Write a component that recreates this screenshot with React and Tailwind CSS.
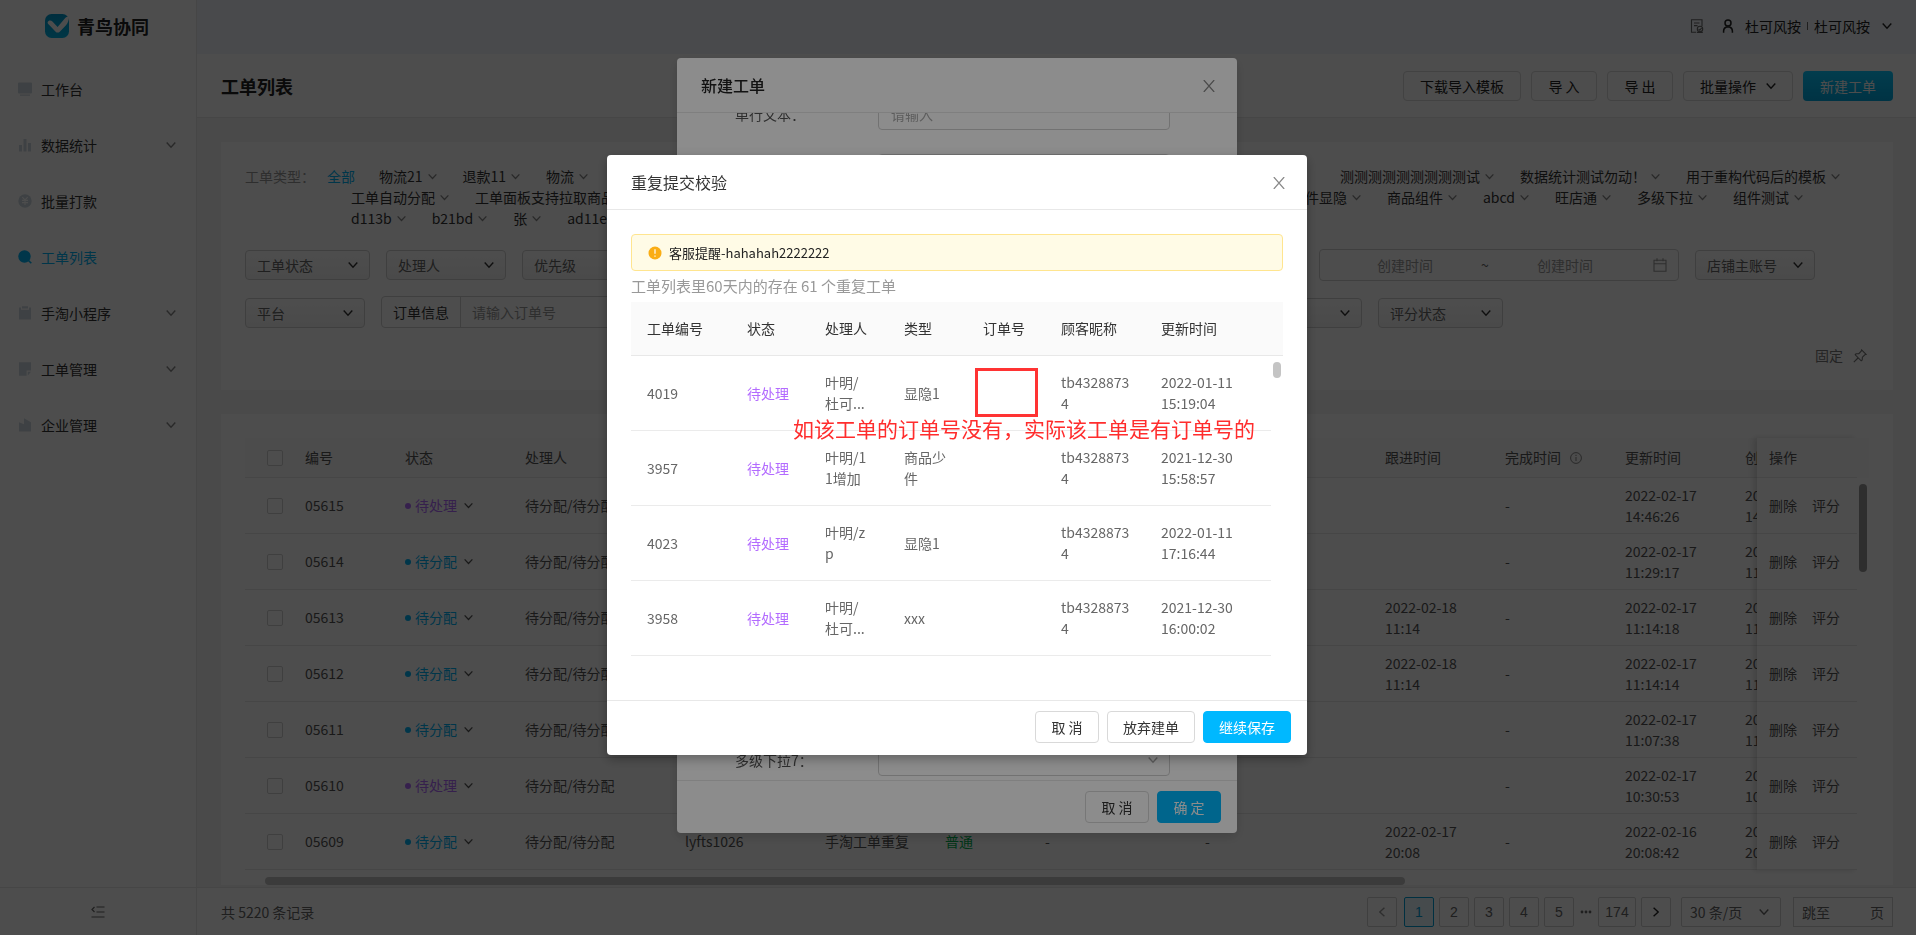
import React, { useState } from "react";
import clsx from "clsx";

const menu = [
  { name: "工作台", icon: "desk" },
  { name: "数据统计", icon: "chart", sub: true },
  { name: "批量打款", icon: "pay" },
  { name: "工单列表", icon: "list" },
  { name: "手淘小程序", icon: "clip", sub: true },
  { name: "工单管理", icon: "note", sub: true },
  { name: "企业管理", icon: "corp", sub: true },
];

const typeRows = [
  {
    left: ["物流21", "退款11", "物流"],
    right: ["测测测测测测测测测试", "数据统计测试勿动！", "用于重构代码后的模板"],
  },
  {
    left: ["工单自动分配", "工单面板支持拉取商品"],
    right: ["组件显隐", "商品组件", "abcd", "旺店通", "多级下拉", "组件测试"],
  },
  { left: ["d113b", "b21bd", "张", "ad11e"], right: [] },
];

const orders = [
  { id: "05615", status: "待处理", follow: "", updated: "2022-02-17\n14:46:26" },
  { id: "05614", status: "待分配", follow: "", updated: "2022-02-17\n11:29:17" },
  { id: "05613", status: "待分配", follow: "2022-02-18\n11:14", updated: "2022-02-17\n11:14:18" },
  { id: "05612", status: "待分配", follow: "2022-02-18\n11:14", updated: "2022-02-17\n11:14:14" },
  { id: "05611", status: "待分配", follow: "", updated: "2022-02-17\n11:07:38" },
  { id: "05610", status: "待处理", follow: "", updated: "2022-02-17\n10:30:53" },
  { id: "05609", status: "待分配", follow: "2022-02-17\n20:08", updated: "2022-02-16\n20:08:42" },
];

const repeats = [
  { id: "4019", owner: "叶明/\n杜可...", type: "显隐1", time: "2022-01-11\n15:19:04" },
  { id: "3957", owner: "叶明/1\n1增加", type: "商品少\n件", time: "2021-12-30\n15:58:57" },
  { id: "4023", owner: "叶明/z\np", type: "显隐1", time: "2022-01-11\n17:16:44" },
  { id: "3958", owner: "叶明/\n杜可...", type: "xxx", time: "2021-12-30\n16:00:02" },
];

function Chevron({ className }) {
  return (
    <svg viewBox="0 0 10 10" className={clsx("shrink-0", className)} fill="none" stroke="currentColor" strokeWidth="1.4">
      <path d="M0.7 2.6 L5 7.2 L9.3 2.6" />
    </svg>
  );
}

function CloseIcon() {
  return (
    <svg viewBox="0 0 12 12" className="h-3 w-3" fill="none" stroke="currentColor" strokeWidth="1.2">
      <path d="M0.8 0 L11.2 12 M11.2 0 L0.8 12" />
    </svg>
  );
}

function MenuIcon({ name }) {
  return (
    <svg viewBox="0 0 14 14" className="h-3.5 w-3.5 shrink-0" fill="currentColor">
      {name === "desk" && <path d="M1 0.5h12a1 1 0 0 1 1 1v9a1 1 0 0 1-1 1H1a1 1 0 0 1-1-1v-9a1 1 0 0 1 1-1zM2 12.5h10v1.2H2z" />}
      {name === "chart" && <path d="M1 7h3v6.5H1zM5.5 1h3v12.5h-3zM10 5h3v8.5h-3z" />}
      {name === "pay" && (
        <>
          <circle cx="7" cy="7" r="6.7" />
          <path d="M4.3 3.2 L7 6 L9.7 3.2 M4 6.4h6 M4 8.6h6 M7 6v5" fill="none" stroke="#fff" strokeWidth="1.1" />
        </>
      )}
      {name === "list" && (
        <>
          <circle cx="6.5" cy="6.5" r="6.2" />
          <path d="M10 10 L13.3 13.3" stroke="currentColor" strokeWidth="1.6" />
        </>
      )}
      {name === "clip" && <path d="M1 1.5h2v2.3h8V1.5h2v12H1zM4 0.2h6v2.4H4z" />}
      {name === "note" && <path d="M1 0.3h12v8.2H8.6v5.2H1zM9.8 9.8H13L9.8 13.4z" />}
      {name === "corp" && <path d="M1 4.2 L6 6.2 V0.3 L13 4.2 V13.5 H1z" />}
    </svg>
  );
}

function Sidebar() {
  return (
    <aside className="flex w-[197px] shrink-0 flex-col border-r border-[#e8e8e8] bg-white">
      <div className="flex h-[52px] items-center gap-2 pl-[45px]">
        <svg viewBox="0 0 24 24" className="h-6 w-6">
          <defs>
            <linearGradient id="logo" x1="0" y1="0" x2="0" y2="1">
              <stop offset="0" stopColor="#0098cc" />
              <stop offset="1" stopColor="#00b4e6" />
            </linearGradient>
          </defs>
          <rect width="24" height="24" rx="6.5" fill="url(#logo)" />
          <path d="M2.6 8.2 C3.5 6 6 6 7.4 7.6 L12.6 13 L20 4.2 C21 3.2 22.5 2.4 24 2.6 C23.8 6.5 23 9 21 11.2 L15 17.4 C13.5 19 11.8 19 10.4 17.4 L4 10.8 C3.2 10 2.6 9.2 2.6 8.2z" fill="#fff" />
        </svg>
        <span className="text-lg font-bold text-[#222]">青鸟协同</span>
      </div>
      <nav className="flex flex-1 flex-col pt-[9px]">
        {menu.map((item) => (
          <a
            key={item.name}
            href="#"
            className={clsx("flex h-14 items-center pl-[18px] pr-5 text-sm", item.icon === "list" ? "text-[#00b3f5]" : "text-[#333]")}
          >
            <span className={item.icon === "list" ? "text-[#00b3f5]" : "text-[#cdd8e0]"}>
              <MenuIcon name={item.icon} />
            </span>
            <span className="ml-[9px] flex-1">{item.name}</span>
            {item.sub && <Chevron className="h-2.5 w-2.5 text-[#888]" />}
          </a>
        ))}
      </nav>
      <button aria-label="收起菜单" className="flex h-12 items-center justify-center border-t border-[#e8e8e8] text-[#666]">
        <svg viewBox="0 0 14 12" className="h-3 w-3.5" fill="none" stroke="currentColor" strokeWidth="1.2">
          <path d="M5.5 1h8 M5.5 6h8 M0.5 11h13 M3.5 1 L1 3.5 L3.5 6" />
        </svg>
      </button>
    </aside>
  );
}

function TopBar() {
  return (
    <header className="flex h-[54px] shrink-0 items-center justify-end bg-[#f0f5fa] pb-0.5 pr-6 text-sm text-[#222]">
      <svg viewBox="0 0 14 14" className="mr-[17px] h-3.5 w-3.5 text-[#666]" fill="none" stroke="currentColor" strokeWidth="1.1">
        <path d="M12 7V0.7H1.5v12.6H6 M4 4h5.5 M4 6.6h3.5 M6.8 13.4h6" />
        <circle cx="10" cy="10" r="2.7" />
        <path d="M8.6 10.2 L9.8 11.2 L11.6 9" />
      </svg>
      <svg viewBox="0 0 14 14" className="mr-2.5 h-3.5 w-3.5" fill="none" stroke="currentColor" strokeWidth="1.5">
        <circle cx="7" cy="4" r="3" />
        <path d="M2.6 13.8 V12 C2.6 9.5 4 8.6 5.4 8 H8.6 C10 8.6 11.4 9.5 11.4 12 V13.8" />
      </svg>
      <span>杜可风按</span>
      <span className="mx-1.5 h-2 w-px bg-[#666]" />
      <span>杜可风按</span>
      <Chevron className="ml-3 h-2.5 w-2.5" />
    </header>
  );
}

function TitleButton({ children }) {
  return (
    <button className="flex h-[30px] min-w-[66px] items-center justify-center rounded border border-[#d9d9d9] bg-white px-4 text-sm text-[#222]">
      {children}
    </button>
  );
}

function TitleBar() {
  return (
    <div className="flex h-16 shrink-0 items-center border-b border-[#e8e8e8] bg-white pl-6 pr-[23px]">
      <h1 className="flex-1 text-lg font-bold text-[#222]">工单列表</h1>
      <div className="flex gap-2.5">
        <TitleButton>下载导入模板</TitleButton>
        <TitleButton>导 入</TitleButton>
        <TitleButton>导 出</TitleButton>
        <TitleButton>
          批量操作
          <Chevron className="ml-2.5 h-2.5 w-2.5" />
        </TitleButton>
        <button className="flex h-[30px] items-center rounded bg-linear-to-b from-[#0ac8ff] to-[#00a8e0] px-[17px] text-sm text-white">新建工单</button>
      </div>
    </div>
  );
}

function FilterSelect({ label, width }) {
  return (
    <div className={clsx("relative", width)}>
      <select
        aria-label={label}
        className="block h-[30px] w-full appearance-none rounded border border-[#d0d0d0] bg-linear-to-b from-white to-[#f5f5f5] pl-[11px] text-sm leading-7 text-[#666]"
      >
        <option>{label}</option>
      </select>
      <Chevron className="pointer-events-none absolute right-3 top-2.5 h-2.5 w-2.5 text-[#333]" />
    </div>
  );
}

function TypeItem({ name }) {
  return (
    <button className="mr-[26px] flex items-center gap-[5px] whitespace-nowrap">
      {name}
      <Chevron className="h-[9px] w-[9px] text-[#888]" />
    </button>
  );
}

function Filters() {
  return (
    <section className="bg-white px-6 pb-6 pt-6 text-sm">
      <div className="leading-[21px] text-[#333]">
        {typeRows.map((row, i) => (
          <div key={i} className="flex">
            {i === 0 ? (
              <div className="flex w-[134px] shrink-0">
                <span className="w-[82px] text-[#999]">工单类型：</span>
                <button className="text-[#00b3f5]">全部</button>
              </div>
            ) : (
              <div className="w-[106px] shrink-0" />
            )}
            {row.left.map((name) => (
              <TypeItem key={name} name={name} />
            ))}
            <div className={clsx("ml-auto flex", i === 0 ? "pr-[3px]" : "pr-10")}>
              {row.right.map((name) => (
                <TypeItem key={name} name={name} />
              ))}
            </div>
          </div>
        ))}
      </div>

      <div className="mt-5 flex items-center gap-4 pr-[54px]">
        <FilterSelect label="工单状态" width="w-[125px]" />
        <FilterSelect label="处理人" width="w-[120px]" />
        <FilterSelect label="优先级" width="w-[120px]" />
        <div className="flex-1" />
        <div className="flex h-8 w-[360px] items-center rounded border border-[#d0d0d0] px-[11px]">
          <input aria-label="创建时间起" placeholder="创建时间" className="w-[148px] text-center placeholder:text-[#999]" />
          <span className="w-3 text-center text-[#666]">~</span>
          <input aria-label="创建时间止" placeholder="创建时间" className="w-[148px] text-center placeholder:text-[#999]" />
          <svg viewBox="0 0 14 14" className="ml-auto h-3.5 w-3.5 text-[#999]" fill="none" stroke="currentColor" strokeWidth="1.1">
            <path d="M1 2.2h12v11H1z M1 5.8h12 M4 0.3v3 M10 0.3v3" />
          </svg>
        </div>
        <FilterSelect label="店铺主账号" width="w-[120px]" />
      </div>

      <div className="mt-[15px] flex items-end gap-4 pr-[366px]">
        <FilterSelect label="平台" width="w-[120px]" />
        <div className="flex h-8 flex-1 items-center rounded border border-[#d0d0d0]">
          <label htmlFor="orderInfo" className="flex h-full items-center border-r border-[#d0d0d0] px-[11px] text-[#333]">
            订单信息
          </label>
          <input id="orderInfo" placeholder="请输入订单号" className="flex-1 px-[11px] placeholder:text-[#999]" />
        </div>
        <FilterSelect label="来源" width="w-[120px]" />
        <FilterSelect label="评分状态" width="w-[125px]" />
      </div>

      <div className="mt-[17px] flex justify-end">
        <button className="flex items-center gap-2.5 leading-[21px] text-[#777]">
          固定
          <svg viewBox="0 0 14 14" className="mr-0.5 h-3.5 w-3.5" fill="none" stroke="currentColor" strokeWidth="1.1">
            <path d="M8.6 0.9 L13.1 5.4 L11.8 5.8 L9.4 8.2 L9.2 11 L8.2 11.8 L2.2 5.8 L3 4.8 L5.8 4.6 L8.2 2.2z M5 9 L0.8 13.2" />
          </svg>
        </button>
      </div>
    </section>
  );
}

function StatusTag({ status }) {
  return (
    <button className={clsx("flex items-center", status === "待处理" ? "text-[#b36bff]" : "text-[#00b3f5]")}>
      <i className="mr-1 h-1.5 w-1.5 rounded-full bg-current" />
      {status}
      <Chevron className="ml-[7px] h-[9px] w-[9px] text-[#555]" />
    </button>
  );
}

const th = "h-10 border-b border-[#e8e8e8] bg-[#fafafa] text-left font-normal whitespace-nowrap";
const td = "h-14 border-b border-[#e8e8e8] whitespace-pre p-0";

function OrderTable() {
  return (
    <section className="mt-6 bg-white px-6 pt-6 text-sm leading-[21px] text-[#555]">
      <div className="flex">
        <div className="min-w-0 flex-1 overflow-hidden">
          <table className="w-full table-fixed border-separate border-spacing-0">
            <colgroup>
              <col className="w-[60px]" />
              <col className="w-[100px]" />
              <col className="w-[120px]" />
              <col className="w-[160px]" />
              <col className="w-[140px]" />
              <col className="w-[120px]" />
              <col className="w-[100px]" />
              <col className="w-[160px]" />
              <col />
              <col className="w-[120px]" />
              <col className="w-[120px]" />
              <col className="w-[120px]" />
              <col className="w-[12px]" />
            </colgroup>
            <thead>
              <tr>
                <th className={clsx(th, "pl-[22px]")}>
                  <input type="checkbox" aria-label="全选" className="block h-4 w-4 appearance-none rounded-xs border border-[#d0d0d0] bg-white" />
                </th>
                <th className={th}>编号</th>
                <th className={th}>状态</th>
                <th className={th}>处理人</th>
                <th className={th}>创建人</th>
                <th className={th}>工单类型</th>
                <th className={th}>优先级</th>
                <th className={th}>订单号</th>
                <th className={th}>备注</th>
                <th className={th}>跟进时间</th>
                <th className={th}>
                  <span className="flex items-center gap-[9px]">
                    完成时间
                    <svg viewBox="0 0 12 12" className="h-3 w-3 text-[#888]" fill="none" stroke="currentColor">
                      <circle cx="6" cy="6" r="5.4" />
                      <path d="M6 5v4 M6 2.8v1.2" />
                    </svg>
                  </span>
                </th>
                <th className={th}>更新时间</th>
                <th className={clsx(th, "overflow-hidden")}>创建时间</th>
              </tr>
            </thead>
            <tbody>
              {orders.map((o) => (
                <tr key={o.id}>
                  <td className={clsx(td, "pl-[22px]")}>
                    <input type="checkbox" aria-label={o.id} className="block h-4 w-4 appearance-none rounded-xs border border-[#d0d0d0] bg-white" />
                  </td>
                  <td className={td}>{o.id}</td>
                  <td className={td}>
                    <StatusTag status={o.status} />
                  </td>
                  <td className={td}>待分配/待分配</td>
                  <td className={td}>lyfts1026</td>
                  <td className={td}>手淘工单重复</td>
                  <td className={clsx(td, "text-[#00b050]")}>普通</td>
                  <td className={td}>-</td>
                  <td className={td}>-</td>
                  <td className={td}>{o.follow}</td>
                  <td className={td}>-</td>
                  <td className={td}>{o.updated}</td>
                  <td className={clsx(td, "overflow-hidden")}>{o.updated}</td>
                </tr>
              ))}
            </tbody>
          </table>
        </div>

        <table className="relative w-[100px] shrink-0 border-separate border-spacing-0 bg-white shadow-[-3px_0_6px_rgba(0,0,0,0.15)]">
          <thead>
            <tr>
              <th className={clsx(th, "pl-3")}>操作</th>
            </tr>
          </thead>
          <tbody>
            {orders.map((o) => (
              <tr key={o.id}>
                <td className={td}>
                  <div className="flex gap-[15px] pl-3">
                    <button>删除</button>
                    <button>评分</button>
                  </div>
                </td>
              </tr>
            ))}
          </tbody>
        </table>

        <div className="relative w-3 bg-white">
          <div className="h-10 bg-[#fafafa]" />
          <div className="ml-0.5 mt-1.5 h-[88px] w-2 rounded-full bg-[#999]" />
        </div>
      </div>
      <div className="mx-5 mt-[7px] h-2">
        <div className="h-2 w-[72%] rounded-full bg-[#c4c4c4]" />
      </div>
    </section>
  );
}

function Pagination() {
  const [page, setPage] = useState(1);
  const box = "flex h-[30px] items-center justify-center rounded-xs border";

  return (
    <footer className="flex h-12 shrink-0 items-center border-t border-[#e8e8e8] bg-white pl-6 pr-[23px] text-sm text-[#666]">
      <span className="flex-1">共 5220 条记录</span>
      <div className="flex items-center gap-[5px] font-['Liberation_Sans','Noto_Sans_CJK_SC',sans-serif]">
        <button aria-label="上一页" className={clsx(box, "mr-0.5 w-[30px] border-[#d0d0d0] text-[#999]")}>
          <Chevron className="h-2.5 w-2.5 rotate-90" />
        </button>
        {[1, 2, 3, 4, 5].map((n) => (
          <button
            key={n}
            onClick={() => setPage(n)}
            className={clsx(box, "w-[30px]", n === page ? "border-[#00a0d8] bg-[#e6f7ff] text-[#00a0d8]" : "border-[#d0d0d0]")}
          >
            {n}
          </button>
        ))}
        <span className="w-[14px] text-center leading-none">
          <svg viewBox="0 0 12 4" className="mx-auto h-1 w-3" fill="currentColor">
            <circle cx="2" cy="2" r="1.4" />
            <circle cx="6" cy="2" r="1.4" />
            <circle cx="10" cy="2" r="1.4" />
          </svg>
        </span>
        <button className={clsx(box, "w-[38px] border-[#d0d0d0]")}>174</button>
        <button aria-label="下一页" className={clsx(box, "w-[30px] border-[#d0d0d0] text-[#222]")}>
          <Chevron className="h-2.5 w-2.5 -rotate-90" />
        </button>
      </div>
      <div className="relative ml-2.5 w-[100px]">
        <select aria-label="每页条数" className="block h-[30px] w-full appearance-none rounded-xs border border-[#d0d0d0] bg-white pl-2 leading-7">
          <option>30 条/页</option>
        </select>
        <Chevron className="pointer-events-none absolute right-3 top-2.5 h-2.5 w-2.5" />
      </div>
      <label className="ml-3 flex h-[30px] w-[100px] items-center border border-[#d0d0d0] px-2">
        跳至
        <input className="w-0 flex-1" />
        页
      </label>
    </footer>
  );
}

function ModalButton({ primary, children }) {
  return (
    <button
      className={clsx(
        "h-8 min-w-16 rounded border px-[15px] text-sm",
        primary ? "border-[#00b8ff] bg-[#00b8ff] text-white" : "border-[#d9d9d9] bg-white text-[#333]"
      )}
    >
      {children}
    </button>
  );
}

function ModalHeader({ title, className }) {
  return (
    <div className="flex h-[55px] shrink-0 items-center justify-between border-b border-[#e8e8e8] pl-6 pr-[22px]">
      <h2 className={clsx("text-base", className)}>{title}</h2>
      <button aria-label="关闭" className="pt-0.5 text-[#888]">
        <CloseIcon />
      </button>
    </div>
  );
}

function CreateModal() {
  return (
    <div className="fixed inset-0 flex justify-center bg-black/45 pb-[102px] pr-0.5 pt-[58px]">
      <div role="dialog" aria-label="新建工单" className="flex w-[560px] flex-col rounded bg-white shadow-[0_4px_12px_rgba(0,0,0,0.15)]">
        <ModalHeader title="新建工单" className="font-medium text-[#222]" />
        <div className="flex flex-1 flex-col overflow-hidden text-sm text-[#555]">
          <div className="-mt-[15px] flex items-center">
            <label htmlFor="singleText" className="w-[201px] pl-[58px]">
              单行文本：
            </label>
            <input id="singleText" placeholder="请输入" className="h-8 w-[292px] rounded border border-[#d0d0d0] px-3 placeholder:text-[#aaa]" />
          </div>
          <div className="mt-6 flex items-center">
            <label htmlFor="singleText2" className="w-[201px] pl-[58px]">
              单行文本2：
            </label>
            <input id="singleText2" className="h-8 w-[292px] rounded border border-[#d0d0d0] px-3" />
          </div>
          <div className="mb-1 mt-auto flex items-center">
            <label htmlFor="level7" className="w-[201px] pl-[58px]">
              多级下拉7：
            </label>
            <div className="relative">
              <select id="level7" className="block h-8 w-[292px] appearance-none rounded border border-[#d0d0d0]" />
              <Chevron className="pointer-events-none absolute right-3 top-[11px] h-2.5 w-2.5 text-[#aaa]" />
            </div>
          </div>
        </div>
        <div className="flex justify-end gap-2 border-t border-[#e8e8e8] px-4 py-2.5">
          <ModalButton>取 消</ModalButton>
          <ModalButton primary>确 定</ModalButton>
        </div>
      </div>
    </div>
  );
}

const rth = "h-[54px] border-b border-[#e8e8e8] bg-[#fafafa] px-4 text-left font-normal text-[#333]";
const rtd = "h-[75px] whitespace-pre-line border-b border-[#ebebeb] py-0 pl-4 text-[#666]";

function RepeatModal() {
  return (
    <div className="fixed inset-0 flex items-start justify-center bg-black/45 pr-0.5 pt-[155px]">
      <div role="dialog" aria-label="重复提交校验" className="w-[700px] rounded bg-white shadow-[0_4px_12px_rgba(0,0,0,0.3)]">
        <ModalHeader title="重复提交校验" className="text-[#333]" />
        <div className="relative px-6 pb-11 pt-6">
          <div className="flex h-[37px] items-center gap-[7px] rounded border border-[#ffe58f] bg-[#fffbe6] pl-4 text-[13px] text-[#222]">
            <svg viewBox="0 0 14 14" className="h-3.5 w-3.5">
              <circle cx="7" cy="7" r="6.5" fill="#faad14" />
              <path d="M7 3.2v4.6 M7 9.4v1.3" stroke="#fff" strokeWidth="1.2" />
            </svg>
            客服提醒-hahahah2222222
          </div>
          <p className="mt-1 pb-1.5 text-[15px] leading-[21px] text-[#999]">工单列表里60天内的存在 61 个重复工单</p>

          <div className="bg-[#fafafa]">
            <table className="w-full table-fixed border-separate border-spacing-0 text-sm leading-[21px]">
              <colgroup>
                <col className="w-[100px]" />
                <col className="w-[78px]" />
                <col className="w-[79px]" />
                <col className="w-[79px]" />
                <col className="w-[78px]" />
                <col className="w-[100px]" />
                <col />
                <col className="w-[12px]" />
              </colgroup>
              <thead>
                <tr className="whitespace-nowrap">
                  <th className={rth}>工单编号</th>
                  <th className={rth}>状态</th>
                  <th className={rth}>处理人</th>
                  <th className={rth}>类型</th>
                  <th className={rth}>订单号</th>
                  <th className={rth}>顾客昵称</th>
                  <th className={rth}>更新时间</th>
                  <td className="border-b border-[#e8e8e8]" />
                </tr>
              </thead>
              <tbody className="bg-white">
                {repeats.map((r, i) => (
                  <tr key={r.id}>
                    <td className={rtd}>{r.id}</td>
                    <td className={clsx(rtd, "text-[#b36bff]")}>待处理</td>
                    <td className={rtd}>{r.owner}</td>
                    <td className={rtd}>{r.type}</td>
                    <td className={rtd} />
                    <td className={rtd}>{"tb4328873\n4"}</td>
                    <td className={rtd}>{r.time}</td>
                    {i === 0 && (
                      <td rowSpan={repeats.length} className="p-0 pl-0.5 pt-1.5 align-top">
                        <div className="h-4 w-2 rounded-full bg-[#c4c4c4]" />
                      </td>
                    )}
                  </tr>
                ))}
              </tbody>
            </table>
          </div>

          {/* 标注 */}
          <div className="pointer-events-none absolute left-[368px] top-[158px] h-[49px] w-[63px] border-3 border-[#ff3333]" />
          <p className="pointer-events-none absolute left-[186px] top-[204px] whitespace-nowrap text-[21px] leading-7 text-[#ff2d2d]">
            如该工单的订单号没有，实际该工单是有订单号的
          </p>
        </div>
        <div className="flex justify-end gap-2 border-t border-[#e8e8e8] px-4 pb-3 pt-2.5">
          <ModalButton>取 消</ModalButton>
          <ModalButton>放弃建单</ModalButton>
          <ModalButton primary>继续保存</ModalButton>
        </div>
      </div>
    </div>
  );
}

export default function App() {
  return (
    <div className="flex h-screen overflow-hidden bg-white font-['Noto_Sans_CJK_SC',sans-serif]">
      <Sidebar />
      <div className="flex min-w-0 flex-1 flex-col">
        <TopBar />
        <TitleBar />
        <main className="min-h-0 flex-1 overflow-hidden bg-[#f4f4f4] pl-6 pr-[23px] pt-6">
          <Filters />
          <OrderTable />
        </main>
        <Pagination />
      </div>
      <CreateModal />
      <RepeatModal />
    </div>
  );
}
